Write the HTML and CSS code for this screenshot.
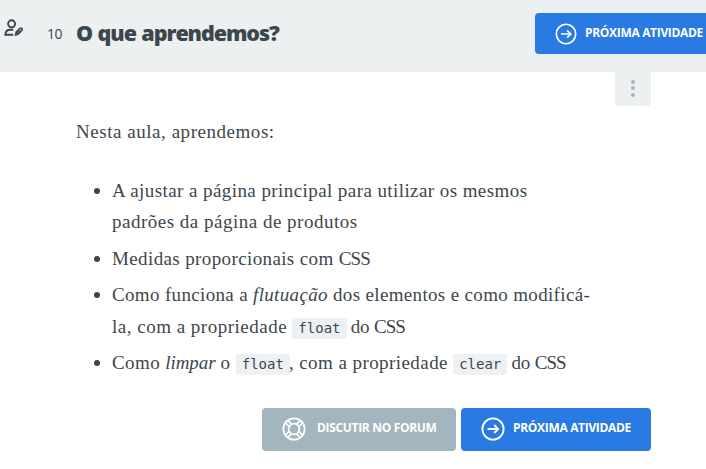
FILE: index.html
```html
<!DOCTYPE html>
<html lang="pt-BR">
<head>
<meta charset="utf-8">
<title>O que aprendemos?</title>
<link rel="stylesheet" href="styles.css">
</head>
<body>
<header class="header">
  <svg class="user-icon" viewBox="0 0 20 18" fill="none" stroke="currentColor" stroke-width="1.900">
    <circle cx="7.600" cy="4.800" r="3.500"/>
    <path d="M9.300 10.800H6C3.300 10.800 1.500 12.700 1.300 15.700H9.300"/>
    <path d="M11.700 15.900L12.300 12.900L16 9.400Q17 8.700 17.900 9.600Q18.600 10.600 17.800 11.400L14.200 15Z" stroke-width="1.700"/>
    <path d="M13 14.500L16 11.500" stroke-width="1.200"/>
  </svg>
  <span class="number">10</span>
  <h1 class="title">O que aprendemos?</h1>
  <a class="button button-top">
    <svg class="arrow" viewBox="0 0 24 24" fill="none" stroke="currentColor" stroke-width="1.800"><circle cx="12" cy="12" r="10.600"/><path d="M6.500 12H17M13.200 8L17.200 12L13.200 16"/></svg>
    <span class="label-next">PRÓXIMA ATIVIDADE</span>
  </a>
</header>
<main class="content">
  <div class="menu"><i></i><i></i><i></i></div>
  <p class="intro">Nesta aula, aprendemos:</p>
  <ul class="list">
    <li><span class="line l1">A ajustar a página principal para utilizar os mesmos</span><span class="line l2">padrões da página de produtos</span></li>
    <li><span class="line l3">Medidas proporcionais com <span class="css">CSS</span></span></li>
    <li><span class="line l4">Como funciona a <em>flutuação</em> dos elementos e como modificá-</span><span class="line l5">la, com a propriedade <code>float</code> <span class="tail">do <span class="css">CSS</span></span></span></li>
    <li><span class="line l6">Como <em class="tight">limpar</em> o <code>float</code>, com a propriedade <code>clear</code> <span class="tail">do <span class="css">CSS</span></span></span></li>
  </ul>
  <div class="actions">
    <a class="button forum">
      <svg class="buoy" viewBox="0 0 24 24" fill="none" stroke="currentColor" stroke-width="1.700"><circle cx="12" cy="12" r="10.700"/><circle cx="12" cy="12" r="5.300"/><path d="M6.900 9.300L3.300 5.700M9.300 6.900L5.700 3.300M14.700 6.900L18.300 3.300M17.100 9.300L20.700 5.700M6.900 14.700L3.300 18.300M9.300 17.100L5.700 20.700M14.700 17.100L18.300 20.700M17.100 14.700L20.700 18.300"/></svg>
      <span class="label-forum">DISCUTIR NO FORUM</span>
    </a>
    <a class="button next">
      <svg class="arrow" viewBox="0 0 24 24" fill="none" stroke="currentColor" stroke-width="1.800"><circle cx="12" cy="12" r="10.600"/><path d="M6.500 12H17M13.200 8L17.200 12L13.200 16"/></svg>
      <span class="label-next">PRÓXIMA ATIVIDADE</span>
    </a>
  </div>
</main>
</body>
</html>
```
FILE: styles.css
```css
* { box-sizing: border-box; }
body {
  margin: 0;
  width: 706px;
  height: 469px;
  overflow: hidden;
  background: #fff;
  color: #3d464d;
  font-family: "Open Sans", sans-serif;
}
.header {
  display: flex;
  align-items: flex-start;
  height: 72px;
  background: #ecf0f1;
  overflow: hidden;
}
.user-icon { width: 20px; height: 18px; margin: 19px 0 0 4px; flex: none; }
.number { width: 29px; margin: 24px 0 0 23px; font-size: 14px; line-height: 20px; letter-spacing: -0.500px; flex: none; }
.title { width: 459px; margin: 18px 0 0; font-size: 21.500px; line-height: 30px; font-weight: 800; letter-spacing: -1.080px; word-spacing: 1px; white-space: nowrap; flex: none; }
.button {
  display: flex;
  align-items: center;
  height: 43px;
  padding: 0 0 0 20px;
  border-radius: 4px;
  background: #2a7ae4;
  color: #fff;
  font-size: 12px;
  font-weight: 700;
  line-height: 18px;
  white-space: nowrap;
  flex: none;
}
.button-top { width: 190px; height: 41px; margin-top: 13px; }
.button-top .arrow { width: 22px; height: 22px; }
.button span { margin-top: -3px; }
.button.button-top span { margin-top: -2px; }
.arrow, .buoy { width: 24px; height: 24px; margin-right: 8px; flex: none; }
.buoy { margin-right: 11px; }
.label-next { letter-spacing: -0.320px; }
.label-forum { letter-spacing: -0.320px; }
.content { width: 575px; margin-left: 76px; font-family: "Liberation Serif", serif; font-size: 19px; line-height: 32px; }
.menu {
  display: flex;
  flex-direction: column;
  align-items: center;
  gap: 2px;
  width: 36px;
  height: 34px;
  margin-left: auto;
  padding-top: 8px;
  border-radius: 0 0 4px 4px;
  background: #ecf0f1;
}
.menu i { width: 4px; height: 4px; margin-bottom: 0.300px; border-radius: 50%; background: #a3b5be; }
.intro { margin: 10px 0 27px; letter-spacing: 0.540px; white-space: nowrap; }
.list { margin: 0; padding: 0 0 0 36px; list-style: none; }
.list li { position: relative; margin-bottom: 5px; }
.list li::before { content: ""; position: absolute; left: -18px; top: 13px; width: 6px; height: 6px; border-radius: 50%; background: #3d464d; }
.line { display: block; height: 31.400px; line-height: 31.400px; letter-spacing: 0.500px; white-space: nowrap; }
.l1 { letter-spacing: 0.420px; }
.l3 { letter-spacing: 0.380px; }
.l4 { letter-spacing: 0.340px; }
.l6 { letter-spacing: 0.430px; }
.tight { letter-spacing: -0.100px; }
.tail { letter-spacing: -0.200px; }
.css { letter-spacing: -0.900px; }
code {
  display: inline-block;
  height: 21px;
  margin-right: -1px;
  padding: 0 6px;
  border-radius: 3px;
  background: #edf1f4;
  font-family: "DejaVu Sans Mono", monospace;
  font-size: 14px;
  line-height: 21px;
  letter-spacing: 0;
}
.actions { display: flex; justify-content: flex-end; gap: 5px; margin-top: 29.600px; font-family: "Open Sans", sans-serif; }
.forum { width: 194px; background: #a3b5be; }
.next { width: 190px; }
```
